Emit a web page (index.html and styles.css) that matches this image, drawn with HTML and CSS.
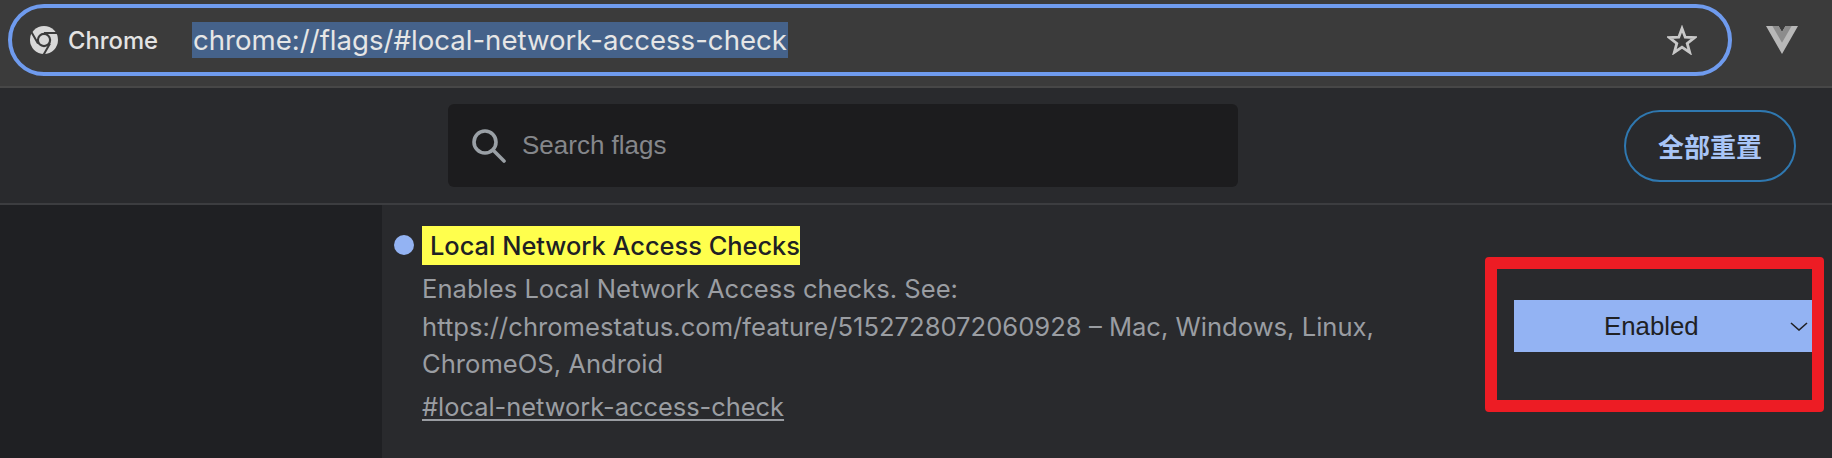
FILE: index.html
```html
<!DOCTYPE html>
<html lang="en">
<head>
    <meta charset="UTF-8">
    <title>Experiments</title>
    <link rel="stylesheet" href="styles.css">
</head>
<body>
    <div class="toolbar">
        <div class="omnibox">
            <svg class="chrome-icon" viewBox="0 0 28 28">
                <circle cx="14" cy="14" r="14" fill="#d8d8d8"/>
                <circle cx="14" cy="14" r="7.2" fill="#3b3b3b"/>
                <circle cx="14" cy="14" r="5" fill="#d8d8d8"/>
                <path d="M14 7 L27 7 M8 17.5 L1.4 6 M20 17.5 L13.4 29" stroke="#3b3b3b" stroke-width="2" fill="none"/>
            </svg>
            <span class="chip-label">Chrome</span>
            <span class="url">chrome://flags/#local-network-access-check</span>
            <svg class="star" viewBox="0 0 30 30">
                <path d="M15 3.5 L18.2 12.2 L27.5 12.6 L20.2 18.4 L22.7 27.4 L15 22.2 L7.3 27.4 L9.8 18.4 L2.5 12.6 L11.8 12.2 Z" fill="none" stroke="#c8c8c8" stroke-width="2.8"/>
            </svg>
        </div>
        <svg class="ext-icon" viewBox="0 0 32 28">
            <path d="M0 0 H12.5 L16 6 L19.5 0 H32 L16 28 Z" fill="#b8b8b8"/>
            <path d="M6.4 0 H12.5 L16 6 L19.5 0 H25.6 L16 16.8 Z" fill="#8c8c8c"/>
        </svg>
    </div>

    <div class="header">
        <div class="search">
            <svg class="search-icon" viewBox="0 0 35 35">
                <circle cx="14" cy="14" r="11" fill="none" stroke="#9aa0a6" stroke-width="3.6"/>
                <path d="M22 22 L33 33" stroke="#9aa0a6" stroke-width="3.6" stroke-linecap="round"/>
            </svg>
            <span class="search-text">Search flags</span>
        </div>
        <button class="reset-btn">全部重置</button>
    </div>

    <div class="content">
        <div class="sidebar"></div>
        <div class="flag-row">
            <span class="dot"></span>
            <div class="flag-info">
                <h2 class="flag-title"><span class="highlight">Local Network Access Checks</span></h2>
                <p class="flag-desc">Enables Local Network Access checks. See:<br>https://chromestatus.com/feature/5152728072060928 – Mac, Windows, Linux,<br>ChromeOS, Android</p>
                <a class="flag-link">#local-network-access-check</a>
            </div>
            <div class="select">
                <span>Enabled</span>
                <svg class="chevron" viewBox="0 0 18 9">
                    <path d="M1 1 L9 8 L17 1" fill="none" stroke="#202124" stroke-width="1.6"/>
                </svg>
            </div>
            <div class="red-box"></div>
        </div>
    </div>
</body>
</html>
```

FILE: styles.css
```css
body {
    margin: 0;
    height: 458px;
    overflow: hidden;
    background-color: #292a2d;
    font-family: 'Inter', 'Noto Sans CJK SC', sans-serif;
}
.toolbar {
    display: flex;
    align-items: flex-start;
    box-sizing: border-box;
    height: 88px;
    padding: 4px 34px 0 8px;
    background-color: #3b3b3b;
    border-bottom: 2px solid #474747;
}
.omnibox {
    display: flex;
    align-items: center;
    box-sizing: border-box;
    width: 1724px;
    height: 72px;
    padding: 0 31px 0 18px;
    border: 4px solid #6f9bee;
    border-radius: 36px;
}
.chrome-icon {
    width: 28px;
    height: 28px;
    flex: none;
}
.chip-label {
    margin-left: 10px;
    width: 124px;
    flex: none;
    color: #e3e3e3;
    font-size: 23.8px;
    font-weight: 500;
}
.url {
    padding: 0 1px;
    line-height: 36px;
    color: #e6e6e6;
    background-color: #45628a;
    font-size: 27.6px;
}
.star {
    width: 30px;
    height: 30px;
    margin-left: auto;
}
.ext-icon {
    width: 32px;
    height: 28px;
    margin: 22px 0 0 34px;
    flex: none;
}
.header {
    display: flex;
    align-items: center;
    justify-content: space-between;
    box-sizing: border-box;
    height: 117px;
    padding: 0 36px 0 448px;
    border-bottom: 2px solid #3c3d40;
}
.search {
    display: flex;
    align-items: center;
    box-sizing: border-box;
    width: 790px;
    height: 83px;
    padding-left: 23px;
    background-color: #1c1c1e;
    border-radius: 6px;
}
.search-icon {
    width: 35px;
    height: 35px;
}
.search-text {
    margin-left: 16px;
    color: #85878b;
    font-family: 'Liberation Sans', sans-serif;
    font-size: 26px;
}
.reset-btn {
    width: 172px;
    height: 72px;
    padding: 0;
    background: none;
    border: 2px solid #2f78b0;
    border-radius: 36px;
    color: #a8c5f7;
    font-family: 'Noto Sans CJK SC', sans-serif;
    font-size: 26px;
    font-weight: 700;
}
.content {
    display: flex;
    height: 253px;
}
.sidebar {
    width: 382px;
    flex: none;
    background-color: #1f2023;
}
.flag-row {
    position: relative;
    flex: 1;
    display: flex;
    align-items: flex-start;
    padding-top: 21px;
}
.dot {
    width: 20px;
    height: 20px;
    margin: 9px 8px 0 12px;
    flex: none;
    border-radius: 50%;
    background-color: #93b3f3;
}
.flag-info {
    width: 1092px;
    flex: none;
}
.flag-title {
    margin: 0;
    font-size: 25.4px;
    font-weight: 500;
    line-height: 39px;
}
.highlight {
    display: inline-block;
    padding-left: 8px;
    background-color: #ffff4d;
    color: #202124;
}
.flag-desc {
    margin: 5px 0 0;
    color: #9a9da2;
    font-size: 25.6px;
    line-height: 37.5px;
}
.flag-link {
    display: inline-block;
    margin-top: 5px;
    color: #9a9da2;
    font-size: 25.4px;
    line-height: 37px;
    text-decoration: underline;
    text-underline-offset: 3px;
}
.select {
    display: flex;
    align-items: center;
    justify-content: space-between;
    box-sizing: border-box;
    width: 298px;
    height: 52px;
    margin-top: 74px;
    padding: 0 4px 0 90px;
    background-color: #93b3f3;
    color: #202124;
    font-family: 'Liberation Sans', sans-serif;
    font-size: 25.8px;
}
.chevron {
    width: 18px;
    height: 9px;
}
.red-box {
    position: absolute;
    left: 1103px;
    top: 52px;
    box-sizing: border-box;
    width: 339px;
    height: 155px;
    border: 12px solid #ed1c24;
    border-radius: 4px;
}
```
